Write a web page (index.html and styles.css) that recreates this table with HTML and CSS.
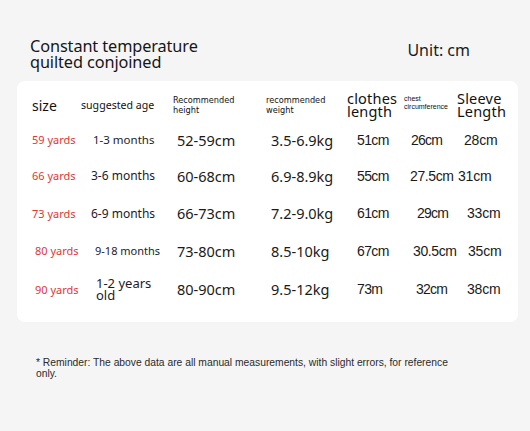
FILE: index.html
```html
<!DOCTYPE html>
<html lang="en">
<head>
<meta charset="utf-8">
<title>Size chart</title>
<link rel="stylesheet" href="styles.css">
</head>
<body>
<div class="page">
  <header class="top">
    <h1 class="title">Constant temperature<br>quilted conjoined</h1>
    <div class="unit">Unit: cm</div>
  </header>

  <section class="card">
    <div class="grid">
      <div class="h h-size">size</div>
      <div class="h h-age">suggested age</div>
      <div class="h h-small">Recommended<br>height</div>
      <div class="h h-small">recommended<br>weight</div>
      <div class="h h-big">clothes<br>length</div>
      <div class="h h-tiny">chest<br>circumference</div>
      <div class="h h-big">Sleeve<br>Length</div>

      <div class="c size">59 yards</div>
      <div class="c age a1">1-3 months</div>
      <div class="c num">52-59cm</div>
      <div class="c num w">3.5-6.9kg</div>
      <div class="c num len">51cm</div>
      <div class="c num chest p7">26cm</div>
      <div class="c num slv p7">28cm</div>

      <div class="c size">66 yards</div>
      <div class="c age a2">3-6 months</div>
      <div class="c num">60-68cm</div>
      <div class="c num w">6.9-8.9kg</div>
      <div class="c num len">55cm</div>
      <div class="c num chest wide p6">27.5cm</div>
      <div class="c num slv p1">31cm</div>

      <div class="c size">73 yards</div>
      <div class="c age a2">6-9 months</div>
      <div class="c num">66-73cm</div>
      <div class="c num w">7.2-9.0kg</div>
      <div class="c num len">61cm</div>
      <div class="c num chest p13">29cm</div>
      <div class="c num slv p10">33cm</div>

      <div class="c size s2">80 yards</div>
      <div class="c age a3">9-18 months</div>
      <div class="c num">73-80cm</div>
      <div class="c num w">8.5-10kg</div>
      <div class="c num len">67cm</div>
      <div class="c num chest wide p9">30.5cm</div>
      <div class="c num slv p11">35cm</div>

      <div class="c size s2">90 yards</div>
      <div class="c age a4">1-2 years<br>old</div>
      <div class="c num">80-90cm</div>
      <div class="c num w">9.5-12kg</div>
      <div class="c num len">73m</div>
      <div class="c num chest p12">32cm</div>
      <div class="c num slv p10">38cm</div>
    </div>
  </section>

  <p class="note">* Reminder: The above data are all manual measurements, with slight errors, for reference<br>only.</p>
</div>
</body>
</html>
```

FILE: styles.css
```css
html, body {
  margin: 0;
  padding: 0;
  background: #f5f5f5;
}

body {
  font-family: "Noto Sans", "Liberation Sans", sans-serif;
  color: #1c1c1c;
  width: 530px;
  height: 431px;
  overflow: hidden;
}

.page {
  padding: 38px 12px 0 17px;
}

.top {
  display: flex;
  justify-content: space-between;
  align-items: flex-start;
  padding: 0 0 0 13px;
}

.title {
  margin: 0;
  font-size: 16.3px;
  font-weight: 400;
  line-height: 16px;
  letter-spacing: -0.1px;
  color: #161616;
}

.unit {
  font-size: 16px;
  line-height: 16px;
  padding: 4px 48px 0 0;
}

.card {
  margin-top: 11px;
  background: #ffffff;
  border-radius: 8px;
  width: 501px;
  padding: 7px 0 13px 15px;
  box-sizing: border-box;
}

.grid {
  display: grid;
  grid-template-columns: 49px 92px 93px 81px 57px 53px 1fr;
  grid-template-rows: 34px 35px 37px 38px 37px 40px;
  align-items: center;
}

.h {
  color: #111;
}

.h-size {
  font-size: 14px;
}

.h-age {
  font-size: 10.6px;
}

.h-small {
  font-family: "DejaVu Sans", sans-serif;
  font-size: 8.2px;
  line-height: 10px;
  padding-bottom: 1px;
}

.h-big {
  font-size: 14.5px;
  line-height: 13.5px;
  letter-spacing: 0.2px;
}

.h-tiny {
  font-family: "Liberation Sans", sans-serif;
  font-size: 7px;
  line-height: 8px;
  padding-bottom: 4px;
}

.c {
  white-space: nowrap;
}

.size {
  color: #e03636;
  font-size: 11px;
}

.s2 {
  padding-left: 3px;
}

.age {
  font-size: 11.5px;
  color: #1d1a2a;
}

.a1 { padding-left: 12px; }
.a2 { padding-left: 10px; font-size: 12px; }
.a3 { padding-left: 14px; font-size: 11px; }
.a4 {
  padding-left: 15px;
  font-size: 13px;
  line-height: 12px;
  white-space: normal;
}

.num {
  font-size: 14.5px;
  padding-left: 4px;
  color: #1a1a1a;
}

.w { padding-left: 5px; }

.len {
  font-family: "Liberation Sans", sans-serif;
  font-size: 14px;
  letter-spacing: -0.6px;
  padding-left: 10px;
}

.chest {
  font-family: "Liberation Sans", sans-serif;
  font-size: 14px;
  letter-spacing: -0.8px;
}

.chest.wide { letter-spacing: -0.4px; }

.slv {
  font-family: "Liberation Sans", sans-serif;
  font-size: 14px;
  letter-spacing: -0.2px;
}

.p1 { padding-left: 1px; }
.p6 { padding-left: 6px; }
.p7 { padding-left: 7px; }
.p9 { padding-left: 9px; }
.p10 { padding-left: 10px; }
.p11 { padding-left: 11px; }
.p12 { padding-left: 12px; }
.p13 { padding-left: 13px; }

.note {
  margin: 35px 0 0 19px;
  font-family: "Liberation Sans", sans-serif;
  font-size: 10.3px;
  line-height: 11px;
  color: #2a2a2a;
}
```
